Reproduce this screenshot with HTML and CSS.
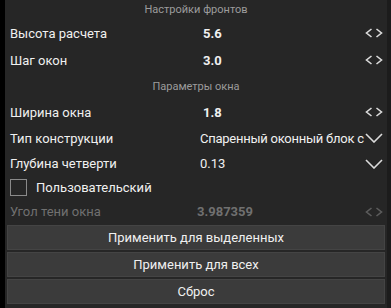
FILE: index.html
```html
<!DOCTYPE html>
<html lang="ru">
<head>
<meta charset="utf-8">
<link rel="stylesheet" href="styles.css">
</head>
<body>
<div class="frame">
  <div class="panel">
    <div class="section s1">Настройки фронтов</div>
    <div class="row r27">
      <span class="label">Высота расчета</span>
      <span class="value bold">5.6</span>
      <svg class="icon" viewBox="0 0 18 10"><path d="M6.5 1 L1.5 5 L6.5 9 M11.5 1 L16.5 5 L11.5 9"/></svg>
    </div>
    <div class="row r26">
      <span class="label">Шаг окон</span>
      <span class="value bold">3.0</span>
      <svg class="icon" viewBox="0 0 18 10"><path d="M6.5 1 L1.5 5 L6.5 9 M11.5 1 L16.5 5 L11.5 9"/></svg>
    </div>
    <div class="section s2">Параметры окна</div>
    <div class="row r26">
      <span class="label">Ширина окна</span>
      <span class="value bold">1.8</span>
      <svg class="icon" viewBox="0 0 18 10"><path d="M6.5 1 L1.5 5 L6.5 9 M11.5 1 L16.5 5 L11.5 9"/></svg>
    </div>
    <div class="row r26">
      <span class="label">Тип конструкции</span>
      <span class="value combo tight">Спаренный оконный блок с</span>
      <svg class="icon" viewBox="0 0 18 10"><path d="M1 1 L9 9 L17 1"/></svg>
    </div>
    <div class="row r25">
      <span class="label">Глубина четверти</span>
      <span class="value combo">0.13</span>
      <svg class="icon" viewBox="0 0 18 10"><path d="M1 1 L9 9 L17 1"/></svg>
    </div>
    <div class="row check r23">
      <span class="box"></span>
      <span class="label">Пользовательский</span>
    </div>
    <div class="row r25 disabled">
      <span class="label">Угол тени окна</span>
      <span class="value bold dis">3.987359</span>
      <svg class="icon" viewBox="0 0 18 10"><path d="M6.5 1 L1.5 5 L6.5 9 M11.5 1 L16.5 5 L11.5 9"/></svg>
    </div>
    <div class="buttons">
      <div class="btn">Применить для выделенных</div>
      <div class="btn">Применить для всех</div>
      <div class="btn">Сброс</div>
    </div>
  </div>
</div>
</body>
</html>
```
FILE: styles.css
```css
html, body {
  margin: 0;
  padding: 0;
  background: #000;
}
body {
  width: 391px;
  height: 308px;
  overflow: hidden;
  font-family: Roboto, "Noto Sans", sans-serif;
  font-size: 13px;
  color: #f0f0f0;
}
.frame {
  display: flex;
  height: 308px;
  padding-left: 5px;
  box-sizing: border-box;
}
.panel {
  width: 382px;
  background: #262626;
  display: flex;
  flex-direction: column;
  border-right: 4px solid #1c1c1c;
}
.section {
  display: flex;
  align-items: center;
  justify-content: center;
  font-size: 11px;
  color: #9c9c9c;
}
.s1 { height: 19px; }
.s2 { height: 26px; }
.row {
  display: grid;
  grid-template-columns: 190px 163px 22px;
  align-items: center;
  padding-left: 5px;
}
.r27 { height: 28px; }
.r26 { height: 26px; }
.r25 { height: 25px; }
.r23 { height: 23px; }
.label {
  white-space: nowrap;
}
.value {
  white-space: nowrap;
}
.bold {
  font-weight: bold;
  padding-left: 3px;
}
.combo {
  padding-left: 0;
}
.tight {
  letter-spacing: -0.25px;
}
.icon {
  width: 18px;
  height: 10px;
  fill: none;
  stroke: #dcdcdc;
  stroke-width: 1.6;
  margin-left: 2px;
}
.check {
  display: flex;
  align-items: center;
}
.box {
  width: 15px;
  height: 15px;
  border: 1.5px solid #8a8a8a;
  margin-right: 9px;
}
.disabled .label, .disabled .value {
  color: #707070;
}
.dis {
  padding-left: 0;
  margin-left: -3px;
}
.disabled .icon {
  stroke: #5c5c5c;
}
.buttons {
  display: flex;
  flex-direction: column;
  gap: 2px;
  padding: 1px 2px 0 2px;
}
.btn {
  height: 25px;
  box-sizing: border-box;
  background: #3b3b3b;
  border: 1px solid #444;
  display: flex;
  align-items: center;
  justify-content: center;
  color: #f0f0f0;
}
```
